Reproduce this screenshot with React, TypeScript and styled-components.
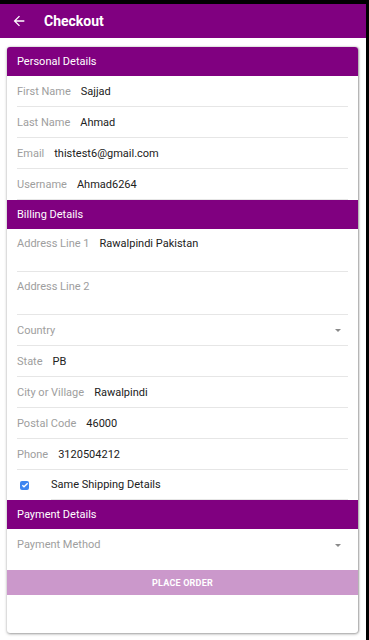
import React from 'react';
import styled, { createGlobalStyle } from 'styled-components';

const GlobalStyle = createGlobalStyle`
    body {
        margin: 0;
        background: #ffffff;
        font-family: Roboto, 'Noto Sans', sans-serif;
    }
`;

const personal = [
    { label: 'First Name', value: 'Sajjad' },
    { label: 'Last Name', value: 'Ahmad' },
    { label: 'Email', value: 'thistest6@gmail.com' },
    { label: 'Username', value: 'Ahmad6264' }
];

const billingBottom = [
    { label: 'State', value: 'PB' },
    { label: 'City or Village', value: 'Rawalpindi' },
    { label: 'Postal Code', value: '46000' },
    { label: 'Phone', value: '3120504212' }
];

function BackArrow() {
    return (
        <svg width="16" height="16" viewBox="0 0 24 24">
            <path d="M20 11H7.83l5.59-5.59L12 4l-8 8 8 8 1.41-1.41L7.83 13H20v-2z" fill="#ffffff" />
        </svg>
    );
}

function Field({ label, value }: { label: string; value?: string }) {
    return (
        <Row>
            <Label>{label}</Label>
            {value && <Value>{value}</Value>}
        </Row>
    );
}

function SelectField({ label, tall }: { label: string; tall?: boolean }) {
    return (
        <SelectRow tall={tall}>
            <Label>{label}</Label>
            <Caret tall={tall} />
        </SelectRow>
    );
}

export default function App() {
    return (
        <>
            <GlobalStyle />
            <Screen>
                <Main>
                    <StatusBar />
                    <AppBar>
                        <BackArrow />
                        <Title>Checkout</Title>
                    </AppBar>
                    <Content>
                        <Card>
                            <SectionHeader>Personal Details</SectionHeader>
                            {personal.map((f) => (
                                <Field key={f.label} label={f.label} value={f.value} />
                            ))}
                            <SectionHeader>Billing Details</SectionHeader>
                            <AreaRow>
                                <Label>Address Line 1</Label>
                                <Value>Rawalpindi Pakistan</Value>
                            </AreaRow>
                            <AreaRow>
                                <Label>Address Line 2</Label>
                            </AreaRow>
                            <SelectField label="Country" />
                            {billingBottom.map((f) => (
                                <Field key={f.label} label={f.label} value={f.value} />
                            ))}
                            <CheckRow>
                                <CheckBox>
                                    <svg width="8" height="8" viewBox="0 0 24 24">
                                        <path d="M4 12.5l5 5L20 6.5" stroke="#ffffff" strokeWidth="4" fill="none" />
                                    </svg>
                                </CheckBox>
                                <CheckLabel>Same Shipping Details</CheckLabel>
                            </CheckRow>
                            <SectionHeader>Payment Details</SectionHeader>
                            <SelectField label="Payment Method" tall />
                            <OrderButton>PLACE ORDER</OrderButton>
                        </Card>
                    </Content>
                </Main>
                <EdgeStrip />
            </Screen>
        </>
    );
}

const Screen = styled.div`
    display: flex;
    flex-direction: row;
    width: 369px;
    height: 640px;
    overflow: hidden;
`;

const Main = styled.div`
    display: flex;
    flex-direction: column;
    width: 366px;
    height: 640px;
`;

const EdgeStrip = styled.div`
    width: 3px;
    height: 640px;
    background-color: #000000;
`;

const StatusBar = styled.div`
    height: 4px;
    background-color: #000000;
`;

const AppBar = styled.div`
    display: flex;
    flex-direction: row;
    align-items: center;
    height: 34px;
    padding-left: 11px;
    background-color: #800080;
`;

const Title = styled.div`
    margin-left: 17px;
    font-size: 14px;
    font-weight: 700;
    color: #ffffff;
`;

const Content = styled.div`
    padding: 9px 8px 7px 7px;
    flex: 1;
    display: flex;
`;

const Card = styled.div`
    flex: 1;
    display: flex;
    flex-direction: column;
    background: #ffffff;
    border-radius: 3px;
    overflow: hidden;
    box-shadow: 0 1px 3px rgba(0, 0, 0, 0.35), 1px 0 2px rgba(0, 0, 0, 0.25);
`;

const SectionHeader = styled.div`
    display: flex;
    align-items: center;
    height: 29px;
    padding-left: 10px;
    background-color: #800080;
    color: #ffffff;
    font-size: 11px;
`;

const Row = styled.div`
    display: flex;
    flex-direction: row;
    align-items: center;
    height: 30px;
    margin: 0 10px;
    border-bottom: 1px solid #e6e6e6;
    font-size: 11px;
`;

const AreaRow = styled.div`
    display: flex;
    flex-direction: row;
    align-items: flex-start;
    height: 34px;
    padding-top: 8px;
    margin: 0 10px;
    border-bottom: 1px solid #e6e6e6;
    font-size: 11px;
`;

const SelectRow = styled.div<{ tall?: boolean }>`
    display: flex;
    flex-direction: row;
    align-items: ${(props) => (props.tall ? 'flex-start' : 'center')};
    justify-content: space-between;
    height: ${(props) => (props.tall ? '24px' : '30px')};
    padding-top: ${(props) => (props.tall ? '9px' : '0')};
    margin: ${(props) => (props.tall ? '0 10px 8px 10px' : '0 10px')};
    border-bottom: ${(props) => (props.tall ? 'none' : '1px solid #e6e6e6')};
    font-size: 11px;
`;

const Label = styled.span`
    color: #9e9e9e;
    margin-right: 10px;
`;

const Value = styled.span`
    color: #212121;
`;

const Caret = styled.span<{ tall?: boolean }>`
    align-self: ${(props) => (props.tall ? 'flex-start' : 'center')};
    margin-top: ${(props) => (props.tall ? '6px' : '0')};
    width: 0;
    height: 0;
    margin-right: 7px;
    border-left: 3px solid transparent;
    border-right: 3px solid transparent;
    border-top: 3px solid #8a8a8a;
`;

const CheckRow = styled.div`
    display: flex;
    flex-direction: row;
    align-items: center;
    height: 30px;
    padding-left: 13px;
    font-size: 11px;
`;

const CheckBox = styled.div`
    display: flex;
    align-items: center;
    justify-content: center;
    width: 9px;
    height: 9px;
    border-radius: 2px;
    background-color: #3d85f0;
`;

const CheckLabel = styled.div`
    flex: 1;
    align-self: stretch;
    display: flex;
    align-items: center;
    margin-left: 22px;
    margin-right: 10px;
    color: #212121;
    border-bottom: 1px solid #e6e6e6;
`;

const OrderButton = styled.div`
    display: flex;
    align-items: center;
    justify-content: center;
    height: 25px;
    background-color: #cb98cb;
    color: #ffffff;
    font-size: 9px;
    font-weight: 700;
    letter-spacing: 0.2px;
`;
